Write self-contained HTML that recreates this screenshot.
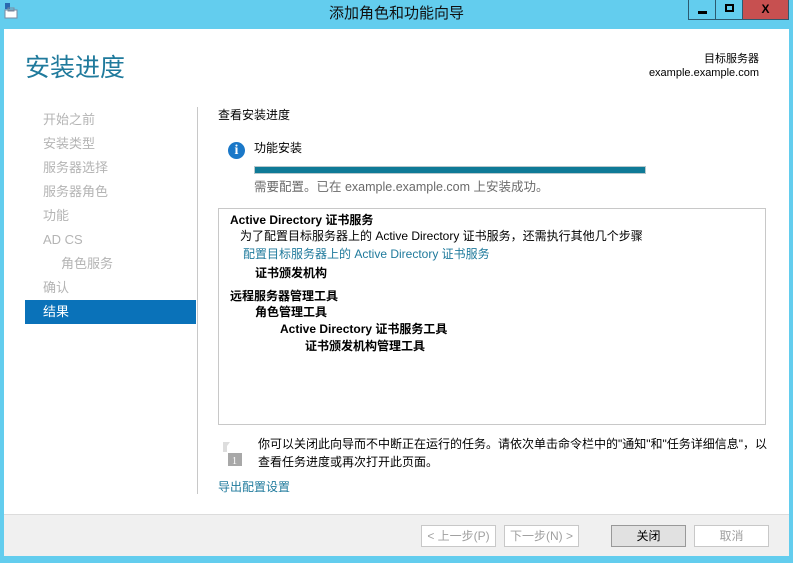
<!DOCTYPE html>
<html><head><meta charset="utf-8"><style>
*{margin:0;padding:0;box-sizing:border-box}
body{width:793px;height:563px;background:#63cdee;position:relative;overflow:hidden;font-family:"Liberation Sans","Noto Sans CJK SC",sans-serif;font-size:12px;color:#000}
.a{position:absolute;white-space:nowrap;line-height:16px}
.nav{color:#b4b4b4;font-size:13px}
.b{font-weight:bold}
.btn{position:absolute;height:22px;top:525px;border:1px solid #c8c8c8;background:#fff;color:#a0a0a0;font-size:12px;text-align:center;line-height:20px}
</style></head><body>
<div class="a" style="left:0;top:0;width:793px;height:29px;background:#63cdee"></div>
<svg class="a" style="left:4px;top:3px" width="14" height="16"><rect x="1" y="0" width="5" height="6" fill="#2a6ab0"/><rect x="1" y="7" width="12" height="8" fill="#fff" stroke="#7a8aa0"/><rect x="4" y="5" width="6" height="3" fill="none" stroke="#7a8aa0"/></svg>
<div class="a" style="left:0;width:793px;top:4px;text-align:center;font-size:15px;line-height:20px;color:#111">添加角色和功能向导</div>
<div class="a" style="left:688px;top:0;width:28px;height:20px;border:1px solid #2c5a70;border-top:none;background:#63cdee"><div class="a" style="left:9px;top:11px;width:9px;height:3px;background:#000"></div></div>
<div class="a" style="left:715px;top:0;width:28px;height:20px;border:1px solid #2c5a70;border-top:none;background:#63cdee"><div class="a" style="left:9px;top:4px;width:9px;height:8px;border:2px solid #000"></div></div>
<div class="a" style="left:742px;top:0;width:47px;height:20px;background:#c75050;border:1px solid #2c5a70;border-top:none;text-align:center;font-weight:bold;font-size:12px;line-height:18px">X</div>
<div class="a" style="left:4px;top:29px;width:785px;height:485px;background:#fff"></div>
<div class="a" style="left:4px;top:514px;width:785px;height:42px;background:#f0f0f0;border-top:1px solid #dcdcdc"></div>
<div class="a" style="left:25px;top:52px;font-size:25px;line-height:32px;color:#1f7a9c">安装进度</div>
<div class="a" style="right:34px;top:52px;font-size:11px;line-height:14px;text-align:right">目标服务器</div>
<div class="a" style="right:34px;top:66px;font-size:11px;line-height:14px;text-align:right">example.example.com</div>
<div class="a nav" style="left:43px;top:112px">开始之前</div>
<div class="a nav" style="left:43px;top:136px">安装类型</div>
<div class="a nav" style="left:43px;top:160px">服务器选择</div>
<div class="a nav" style="left:43px;top:184px">服务器角色</div>
<div class="a nav" style="left:43px;top:208px">功能</div>
<div class="a nav" style="left:43px;top:232px">AD CS</div>
<div class="a nav" style="left:61px;top:256px">角色服务</div>
<div class="a nav" style="left:43px;top:280px">确认</div>
<div class="a" style="left:25px;top:300px;width:171px;height:24px;background:#0a72b9"></div>
<div class="a" style="left:43px;top:304px;color:#fff;font-size:13px">结果</div>
<div class="a" style="left:197px;top:107px;width:1px;height:387px;background:#c8c8c8"></div>
<div class="a" style="left:218px;top:107px">查看安装进度</div>
<div class="a" style="left:228px;top:142px;width:17px;height:17px;border-radius:50%;background:#1a78c8;color:#fff;font-weight:bold;font-family:'Liberation Serif',serif;font-size:14px;text-align:center;line-height:17px">i</div>
<div class="a" style="left:254px;top:140px">功能安装</div>
<div class="a" style="left:254px;top:166px;width:392px;height:8px;background:#0f7a97;border:1px solid #b8c8cc"></div>
<div class="a" style="left:254px;top:179px;color:#6a6a6a;font-size:12.5px">需要配置。已在 example.example.com 上安装成功。</div>
<div class="a" style="left:218px;top:208px;width:548px;height:217px;border:1px solid #c8c8c8"></div>
<div class="a b" style="left:230px;top:212px">Active Directory 证书服务</div>
<div class="a" style="left:240px;top:228px">为了配置目标服务器上的 Active Directory 证书服务，还需执行其他几个步骤</div>
<div class="a" style="left:243px;top:246px;color:#1f7a9c">配置目标服务器上的 Active Directory 证书服务</div>
<div class="a b" style="left:255px;top:265px">证书颁发机构</div>
<div class="a b" style="left:230px;top:288px">远程服务器管理工具</div>
<div class="a b" style="left:255px;top:304px">角色管理工具</div>
<div class="a b" style="left:280px;top:321px">Active Directory 证书服务工具</div>
<div class="a b" style="left:305px;top:338px">证书颁发机构管理工具</div>
<svg class="a" style="left:220px;top:440px" width="24" height="28"><path d="M3 2 L10 2 L7 6 L7 12 L3 12 Z" fill="#ddd"/><rect x="8" y="13" width="14" height="13" fill="#a8a8a8"/><text x="12" y="24" font-size="10" fill="#fff" font-family="Liberation Serif">1</text></svg>
<div class="a" style="left:258px;top:436px">你可以关闭此向导而不中断正在运行的任务。请依次单击命令栏中的"通知"和"任务详细信息"，以</div>
<div class="a" style="left:258px;top:454px">查看任务进度或再次打开此页面。</div>
<div class="a" style="left:218px;top:479px;color:#1f7a9c">导出配置设置</div>
<div class="btn" style="left:421px;width:75px">&lt; 上一步(P)</div>
<div class="btn" style="left:504px;width:75px">下一步(N) &gt;</div>
<div class="btn" style="left:611px;width:75px;background:#e1e1e1;border-color:#999;color:#000">关闭</div>
<div class="btn" style="left:694px;width:75px">取消</div>
</body></html>
